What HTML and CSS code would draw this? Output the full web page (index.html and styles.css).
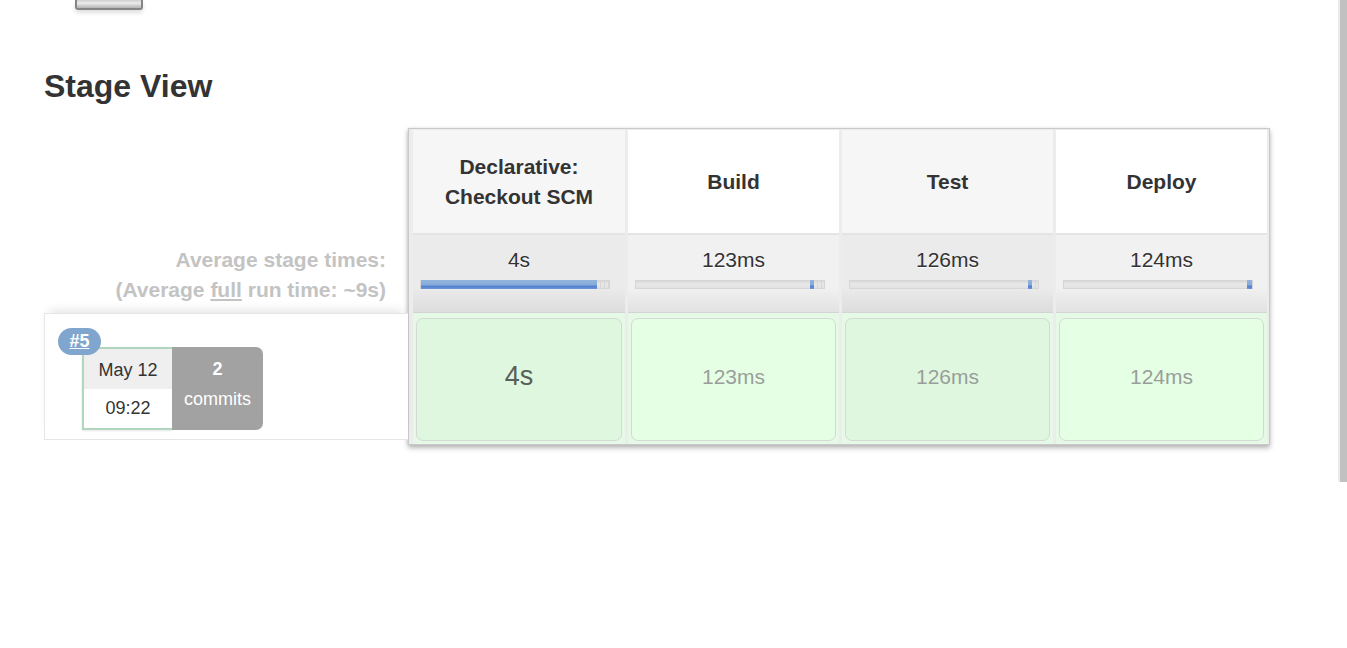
FILE: index.html
```html
<!DOCTYPE html>
<html>
<head>
<meta charset="utf-8">
<link rel="stylesheet" href="styles.css">
</head>
<body>
<div class="page">
  <div class="top-icon"></div>
  <h2 class="title">Stage View</h2>
  <div class="stage-view">
    <div class="side">
      <div class="averages">
        <div>Average stage times:</div>
        <div>(Average <span class="u">full</span> run time: ~9s)</div>
      </div>
      <div class="build-row">
        <span class="badge">#5</span>
        <div class="date">
          <div class="day">May 12</div>
          <div class="time">09:22</div>
        </div>
        <div class="commits"><b>2</b><span>commits</span></div>
      </div>
    </div>
    <div class="table">
      <div class="col odd">
        <div class="head">Declarative:<br>Checkout SCM</div>
        <div class="avg">
          <div class="val">4s</div>
          <div class="bar"><span class="fill" style="margin-left:0;width:176px"></span><span class="rest"></span></div>
        </div>
        <div class="run"><div class="box main">4s</div></div>
      </div>
      <div class="col even">
        <div class="head">Build</div>
        <div class="avg">
          <div class="val">123ms</div>
          <div class="bar"><span class="fill" style="margin-left:174px;width:4px"></span><span class="rest"></span></div>
        </div>
        <div class="run"><div class="box">123ms</div></div>
      </div>
      <div class="col odd">
        <div class="head">Test</div>
        <div class="avg">
          <div class="val">126ms</div>
          <div class="bar"><span class="fill" style="margin-left:178px;width:4px"></span><span class="rest"></span></div>
        </div>
        <div class="run"><div class="box">126ms</div></div>
      </div>
      <div class="col even">
        <div class="head">Deploy</div>
        <div class="avg">
          <div class="val">124ms</div>
          <div class="bar"><span class="fill" style="margin-left:183px;width:5px"></span></div>
        </div>
        <div class="run"><div class="box">124ms</div></div>
      </div>
    </div>
  </div>
</div>
<div class="scrollbar"></div>
</body>
</html>
```

FILE: styles.css
```css
* { box-sizing: border-box; }
html, body {
  margin: 0;
  padding: 0;
  background: #fff;
}
body {
  font-family: "Liberation Sans", Arial, sans-serif;
  color: #333;
  width: 1347px;
  height: 648px;
  overflow: hidden;
}
.page {
  padding-left: 44px;
}
.top-icon {
  margin-left: 31px;
  width: 68px;
  height: 10px;
  border: 2px solid #858585;
  border-top: none;
  border-radius: 0 0 3px 3px;
  background: linear-gradient(to bottom, #cfcfcf 0%, #ececec 40%, #c9c9c9 75%, #b5b5b5 100%);
  box-shadow: 0 3px 4px rgba(0, 0, 0, 0.12);
}
.title {
  margin: 58px 0 0;
  font-size: 32px;
  line-height: 36px;
  font-weight: bold;
  color: #333;
}
.stage-view {
  display: flex;
  align-items: flex-start;
  margin-top: 24px;
}
.side {
  width: 364px;
  flex: none;
}
.averages {
  height: 185px;
  display: flex;
  flex-direction: column;
  justify-content: flex-end;
  align-items: flex-end;
  padding: 0 22px 8px 0;
  font-size: 21px;
  line-height: 30px;
  font-weight: bold;
  color: #c3c3c3;
}
.averages .u {
  text-decoration: underline;
}
.build-row {
  position: relative;
  height: 127px;
  border: 1px solid #e6e6e6;
  border-right: none;
  display: flex;
  align-items: flex-start;
  padding: 33px 0 0 37px;
  box-shadow: 0 -7px 10px -5px rgba(0, 0, 0, 0.12);
  background: #fff;
}
.badge {
  position: absolute;
  left: 13px;
  top: 14px;
  width: 43px;
  height: 27px;
  border-radius: 14px;
  background: #80a6cd;
  color: #fff;
  font-weight: bold;
  font-size: 18px;
  line-height: 27px;
  text-align: center;
  text-decoration: underline;
  z-index: 2;
}
.date {
  width: 90px;
  height: 83px;
  border: 2px solid #b0d6c0;
  border-right: none;
  font-size: 18px;
  color: #333;
  text-align: center;
  display: flex;
  flex-direction: column;
  box-shadow: 0 1px 2px rgba(0, 0, 0, 0.1);
}
.date .day {
  height: 40px;
  line-height: 42px;
  background: #efefef;
}
.date .time {
  flex: 1;
  line-height: 38px;
  background: #fff;
}
.commits {
  width: 91px;
  height: 83px;
  background: #a2a2a2;
  border-radius: 0 7px 7px 0;
  color: #fff;
  font-size: 18px;
  line-height: 30px;
  text-align: center;
  display: flex;
  flex-direction: column;
  padding-top: 7px;
}
.commits b {
  font-weight: bold;
}
.table {
  display: grid;
  grid-template-columns: 212px 211px 211px 211px;
  column-gap: 3px;
  width: 862px;
  padding: 1px 1px 0 4px;
  border: 1px solid #c9c9c9;
  background: #ececec;
  box-shadow: 0 3px 5px rgba(0, 0, 0, 0.28), -1px 0 3px rgba(0, 0, 0, 0.08);
}
.col {
  display: flex;
  flex-direction: column;
}
.head {
  display: flex;
  align-items: center;
  justify-content: center;
  text-align: center;
  font-size: 21px;
  line-height: 30px;
  font-weight: bold;
  color: #333;
  border-bottom: 2px solid #e4e4e4;
  height: 105px;
}
.odd .head { background: #f6f6f6; }
.even .head { background: #fff; }
.avg {
  height: 78px;
  padding: 10px 7px 0;
  border-bottom: 1px solid #d4d4d4;
}
.odd .avg { background: linear-gradient(to bottom, #ebebeb 0%, #ebebeb 68%, #dddddd 100%); }
.even .avg { background: linear-gradient(to bottom, #f1f1f1 0%, #f1f1f1 68%, #e2e2e2 100%); }
.val {
  font-size: 21px;
  line-height: 30px;
  text-align: center;
  color: #333;
  text-shadow: 0 1px 0 #fff;
}
.bar {
  margin-top: 5px;
  width: 190px;
  height: 9px;
  background: linear-gradient(to bottom, #d8d8d8 0%, #e8e8e8 40%, #e2e2e2 100%);
  border: 1px solid #d6d6d6;
  display: flex;
}
.fill {
  display: block;
  height: 9px;
  margin-top: -1px;
  background: linear-gradient(to bottom, #92b3dc 0%, #86aad9 55%, #4f80d0 70%, #6f98d6 100%);
}
.rest {
  flex: 1;
  background: repeating-linear-gradient(to right, transparent 0, transparent 3px, #d2d2d2 3px, #d2d2d2 4px);
  opacity: 0.7;
}
.run {
  height: 131px;
  padding: 5px 3px 3px 3px;
  background: #e6f9e6;
}
.box {
  height: 123px;
  border: 1px solid #d3dad3;
  border-radius: 7px;
  display: flex;
  align-items: center;
  justify-content: center;
  padding-bottom: 6px;
  font-size: 21px;
  color: #9a9e9a;
}
.odd .box { background: #dff7df; }
.even .box { background: #e5ffe5; }
.box.main {
  font-size: 27px;
  color: #5a5f5a;
}
.scrollbar {
  position: fixed;
  top: 0;
  right: 0;
  width: 9px;
  height: 482px;
  border-left: 2px solid #ececec;
  background: #c1c1c1;
}
```
